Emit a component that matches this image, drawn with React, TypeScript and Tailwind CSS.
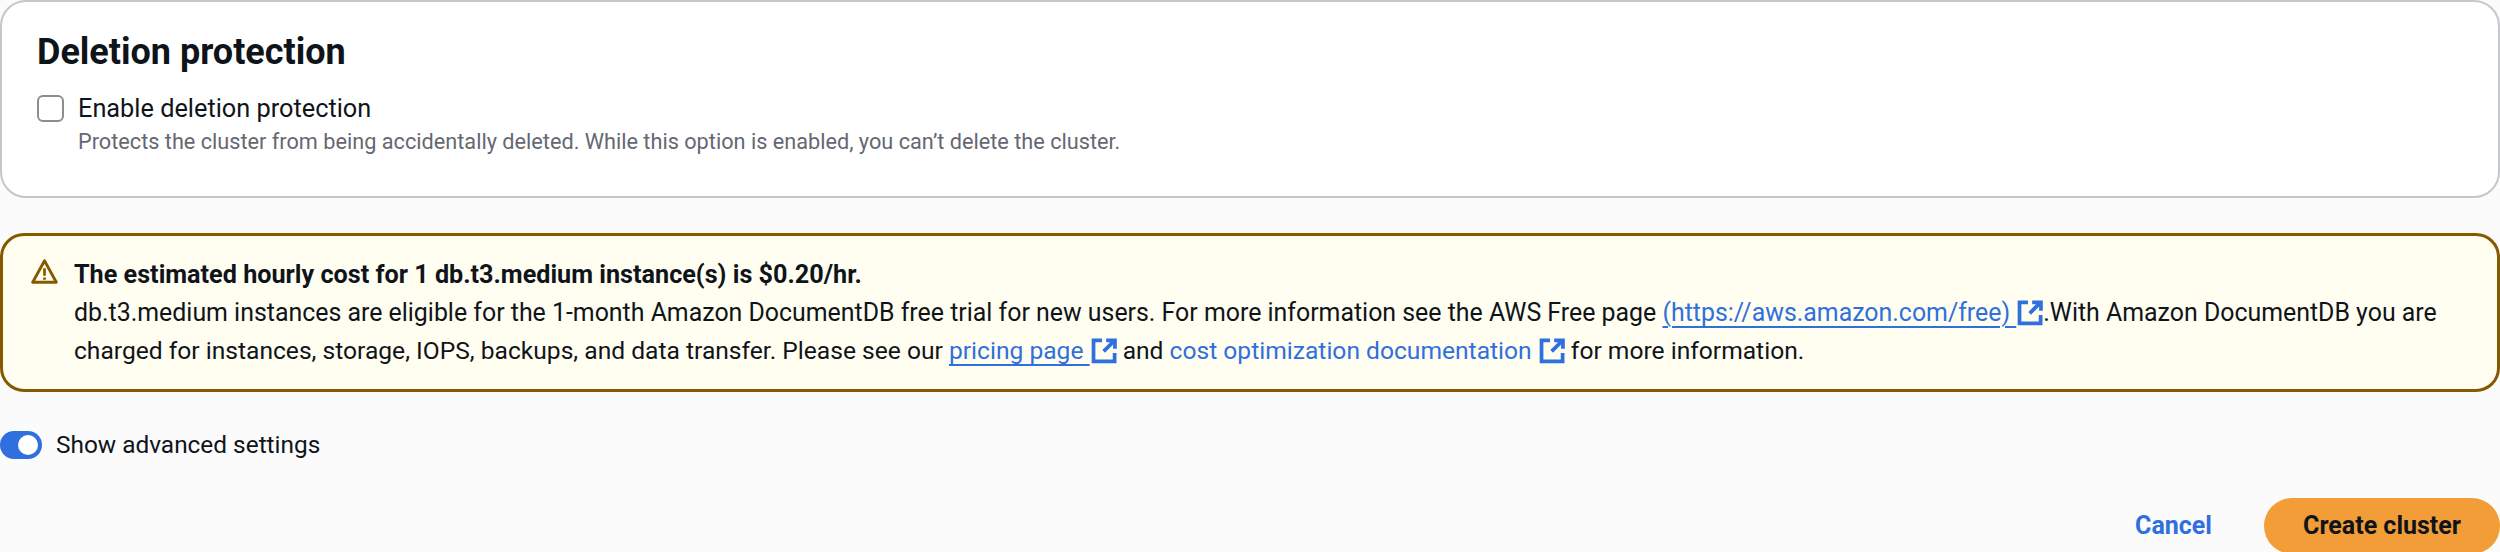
const FONT = "font-['Roboto','Liberation_Sans',sans-serif]";

function ExternalIcon() {
  return (
    <svg viewBox="0 0 16 16" className="inline-block w-[27px] h-[27px] ml-[1px] -mr-[1px] align-[-5px] text-[#2f6fde]" fill="none" stroke="currentColor" strokeWidth="2.2">
      <path d="M6.5 2H1.5v12.5H14V9.5" />
      <path d="M9 2h5.2v5M14 2 7.5 8.5" />
    </svg>
  );
}

function WarningIcon() {
  return (
    <svg viewBox="0 0 16 16" className="w-[27px] h-[27px] shrink-0 mt-[2px]" fill="none" stroke="#855900" strokeWidth="1.7" strokeLinejoin="round">
      <path d="M8 1.6 1 14.4h14L8 1.6Z" />
      <path d="M8 6v4.5M8 11.5v1.4" strokeWidth="1.6" />
    </svg>
  );
}

export default function App() {
  return (
    <div className={`w-[2500px] h-[552px] overflow-hidden bg-[#fbfbfc] text-[#0f141a] ${FONT}`}>
      <section className="h-[198px] bg-white border-2 border-[#c6c6cd] rounded-[26px] pl-[35px] pt-[30px]">
        <h2 className="text-[36px] leading-[40px] font-bold">Deletion protection</h2>
        <div className="flex mt-[21px]">
          <div className="w-[27px] h-[27px] mt-[2px] rounded-[6px] border-2 border-[#8c8c94] bg-white" />
          <div className="ml-[14px]">
            <div className="text-[25.3px] leading-[32px]">Enable deletion protection</div>
            <div className="text-[21.7px] leading-[31px] pt-[1px] text-[#656871]">
              Protects the cluster from being accidentally deleted. While this option is enabled, you can’t delete the cluster.
            </div>
          </div>
        </div>
      </section>

      <section className="mt-[35px] h-[159px] flex bg-[#fffef0] border-[3px] border-[#855900] rounded-[24px] pl-[28px] pt-[20px]">
        <WarningIcon />
        <div className="ml-[16px] text-[24.9px] leading-[38px]">
          <div className="font-bold text-[25.2px]">The estimated hourly cost for 1 db.t3.medium instance(s) is $0.20/hr.</div>
          <div>
            db.t3.medium instances are eligible for the 1-month Amazon DocumentDB free trial for new users. For more information see the AWS Free page{" "}
            <a className="text-[#2f6fde] underline decoration-2 underline-offset-[5px]">(https://aws.amazon.com/free)&nbsp;</a>
            <ExternalIcon />.With Amazon DocumentDB you are
          </div>
          <div className="text-[24.6px]">
            charged for instances, storage, IOPS, backups, and data transfer. Please see our{" "}
            <a className="text-[#2f6fde] underline decoration-2 underline-offset-[5px]">pricing page&nbsp;</a>
            <ExternalIcon /> and{" "}
            <a className="text-[#2f6fde]">cost optimization documentation&nbsp;</a>
            <ExternalIcon /> for more information.
          </div>
        </div>
      </section>

      <div className="mt-[39px] flex items-center h-[28px]">
        <div className="relative w-[42px] h-[28px] rounded-full bg-[#2f6fde]">
          <div className="absolute right-[4px] top-[4px] w-[20px] h-[20px] rounded-full bg-white" />
        </div>
        <span className="ml-[14px] text-[24.4px]">Show advanced settings</span>
      </div>

      <div className="mt-[39px] flex justify-end items-center">
        <span className="text-[25px] font-bold text-[#2f6fde]">Cancel</span>
        <button className="ml-[52px] w-[236px] h-[56px] rounded-full bg-[#f29d38] text-[25px] font-bold">Create cluster</button>
      </div>
    </div>
  );
}
